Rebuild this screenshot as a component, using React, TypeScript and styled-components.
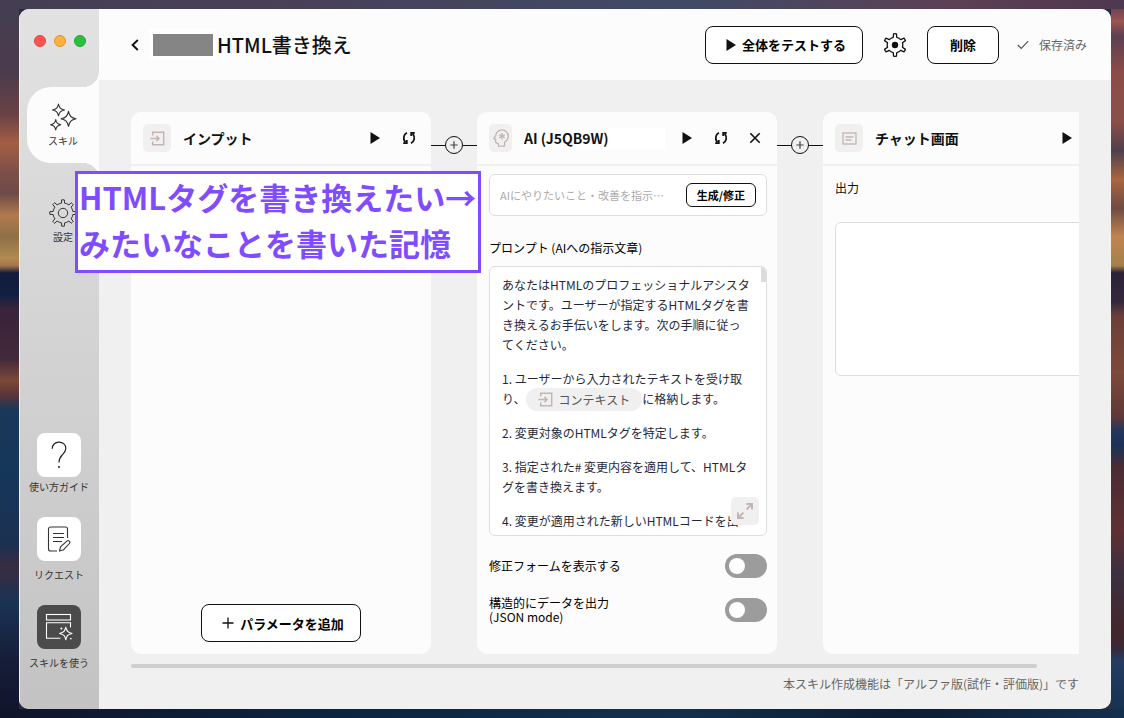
import React from "react";
import styled, { createGlobalStyle, css } from "styled-components";

const GlobalStyle = createGlobalStyle`
  *, *::before, *::after { box-sizing: border-box; }
  body {
    margin: 0;
    color: #111;
    font-family: "Noto Sans CJK JP", "Noto Sans", sans-serif;
    font-size: 12px;
  }
  button, input, textarea { font: inherit; color: inherit; margin: 0; }
  button { cursor: pointer; padding: 0; border: 0; background: none; }
  svg { display: block; flex: none; }
  h1, h2, p { margin: 0; }
`;

/* ---------- frame ---------- */

const Desktop = styled.div`
  display: flex;
  min-height: 100vh;
  padding: 9px 13px 9px 19px;
  background:
    linear-gradient(90deg, #443e52 0%, #4a4058 25%, #3f4a66 60%, #5c4054 85%, #4e3850 100%) top / 100% 9px no-repeat,
    linear-gradient(90deg, #10142a 0%, #0b2440 30%, #12304c 60%, #0c1c33 80%, #14304f 100%) bottom / 100% 9px no-repeat,
    linear-gradient(180deg, #443e52 0%, #4b3b4c 10%, #6b4244 16%, #a35e44 20%, #7c4f48 24%, #6d4c48 27%, #b07a4c 30%, #8f7048 33%, #b08a50 36%, #a5754c 37%, #141c3c 38%, #101f42 41%, #38233a 43%, #422a3a 50%, #7c4838 53%, #5a3438 55%, #1a3858 57%, #15375a 66%, #1c3050 76%, #3a2c40 79%, #1a3354 84%, #161d38 92%, #10142a 100%) left / 19px 100% no-repeat,
    linear-gradient(180deg, #4e3850 0%, #9c5450 3%, #5c4054 5%, #8c4c48 10%, #8a4f48 17%, #50404e 21%, #a8663f 25%, #704c44 29%, #c08450 33%, #a5804a 37%, #2c2238 38%, #33283c 42%, #6b3f38 44%, #7d4a3c 52%, #5e3838 58%, #24365c 60%, #1a3258 62%, #4a2c34 65%, #5f3034 74%, #3c3040 80%, #44262c 88%, #3a2834 90%, #263c62 92%, #14304f 100%) right / 13px 100% no-repeat;
  background-color: #2a2a40;
`;

const Window = styled.div`
  flex: 1;
  display: flex;
  min-width: 0;
  border-radius: 10px;
  overflow: hidden;
  background: #f0f0f0;
`;

const Workspace = styled.div`
  flex: 1;
  min-width: 0;
  display: flex;
  flex-direction: column;
`;

/* ---------- sidebar ---------- */

const Sidebar = styled.aside`
  width: 80px;
  flex: none;
  display: flex;
  flex-direction: column;
  background: linear-gradient(180deg, #e2e2e2, #c3c3c3);
  box-shadow: inset 1px 0 #f0f0f0;
`;

const TrafficLights = styled.div`
  display: flex;
  gap: 8px;
  padding: 26px 0 40px 15px;
`;

const Light = styled.span<{ $fill: string; $edge: string }>`
  width: 12px;
  height: 12px;
  border-radius: 50%;
  background: ${(p) => p.$fill};
  border: 1px solid ${(p) => p.$edge};
`;

const Nav = styled.nav`
  display: flex;
  flex-direction: column;
  gap: 20px;
  padding-left: 8px;
`;

const corner = css`
  content: "";
  position: absolute;
  right: 0;
  width: 16px;
  height: 16px;
`;

const NavItem = styled.a<{ $active?: boolean }>`
  position: relative;
  display: flex;
  flex-direction: column;
  align-items: center;
  height: 76px;
  padding-top: 16px;
  color: #333;
  font-size: 10px;
  line-height: 14px;
  text-decoration: none;
  ${(p) =>
    p.$active &&
    css`
      background: #fcfcfc;
      border-radius: 24px 0 0 24px;
      &::before {
        ${corner}
        bottom: 100%;
        background: radial-gradient(circle at 0 0, transparent 16px, #fcfcfc 16px);
      }
      &::after {
        ${corner}
        top: 100%;
        background: radial-gradient(circle at 0 100%, transparent 16px, #fcfcfc 16px);
      }
    `}
`;

const NavIcon = styled.span`
  margin-bottom: 3px;
`;

const Shortcuts = styled.div`
  margin-top: auto;
  padding-bottom: 39px;
  display: flex;
  flex-direction: column;
  align-items: center;
  gap: 23px;
`;

const Shortcut = styled.button<{ $tight?: boolean }>`
  display: flex;
  flex-direction: column;
  align-items: center;
  gap: ${(p) => (p.$tight ? 3 : 7)}px;
  font-size: 10px;
  line-height: 14px;
  color: #333;
  white-space: nowrap;
`;

const ShortcutTile = styled.span<{ $dark?: boolean }>`
  width: 44px;
  height: 44px;
  border-radius: 8px;
  display: grid;
  place-items: center;
  background: ${(p) => (p.$dark ? "#4b4b4b" : "#fff")};
`;

/* ---------- header ---------- */

const Header = styled.header`
  display: flex;
  align-items: center;
  height: 71px;
  flex: none;
  padding: 0 24px 0 26px;
  background: #fcfcfc;
`;

const BackButton = styled.button`
  width: 20px;
  height: 20px;
  display: grid;
  place-items: center;
`;

const Redacted = styled.span`
  width: 68px;
  height: 30px;
  margin-left: 4px;
  border: 4px solid #fff;
  background: #858585;
`;

const Title = styled.h1`
  font-size: 20px;
  line-height: 30px;
  font-weight: 500;
  white-space: nowrap;
`;

const HeaderActions = styled.div`
  margin-left: auto;
  display: flex;
  align-items: center;
  gap: 20px;
`;

const OutlineButton = styled.button<{ $width: number; $withIcon?: boolean }>`
  display: inline-flex;
  align-items: center;
  justify-content: center;
  gap: 6px;
  width: ${(p) => p.$width}px;
  height: 38px;
  padding-left: ${(p) => (p.$withIcon ? 4 : 0)}px;
  border: 1px solid #111;
  border-radius: 8px;
  background: #fff;
  color: #000;
  font-size: 13px;
  font-weight: 700;
  white-space: nowrap;
`;

const Saved = styled.span`
  display: flex;
  align-items: center;
  gap: 10px;
  margin-left: -2px;
  color: #666;
  white-space: nowrap;
`;

/* ---------- flow of cards ---------- */

const Board = styled.main`
  flex: 1;
  display: flex;
  flex-direction: column;
  padding: 32px 32px 15px;
  min-width: 0;
`;

const Flow = styled.div`
  flex: 1;
  display: flex;
  overflow: hidden;
`;

const Card = styled.section`
  flex: none;
  width: 300px;
  display: flex;
  flex-direction: column;
  border-radius: 10px;
  background: #fcfcfc;
`;

const CardHeader = styled.div`
  display: flex;
  align-items: center;
  height: 54px;
  padding: 0 12px;
  border-bottom: 2px solid #f0f0f0;
`;

const IconTile = styled.span<{ $width?: number }>`
  width: ${(p) => p.$width ?? 28}px;
  height: 28px;
  flex: none;
  border-radius: 5px;
  display: grid;
  place-items: center;
  background: #f0f0f0;
  color: #c4b5b2;
`;

const CardTitle = styled.h2`
  margin-left: 12px;
  font-size: 14px;
  line-height: 21px;
  font-weight: 700;
  white-space: nowrap;
`;

const CardTitleInput = styled.input`
  width: 141px;
  height: 21px;
  margin-left: 12px;
  padding: 0;
  border: 0;
  background: #fff;
  font-size: 14px;
  font-weight: 700;
`;

const CardTools = styled.div`
  margin-left: auto;
  display: flex;
  gap: 14px;
`;

const ToolButton = styled.button`
  width: 20px;
  height: 20px;
  display: grid;
  place-items: center;
`;

const CardBody = styled.div`
  flex: 1;
  display: flex;
  flex-direction: column;
  padding: 8px 10px 32px 12px;
`;

const CardFooter = styled.div`
  margin-top: auto;
  padding-bottom: 12px;
  display: flex;
  justify-content: center;
`;

const Connector = styled.div`
  flex: none;
  width: 46px;
  height: 18px;
  margin-top: 24px;
  display: flex;
  align-items: center;
`;

const Wire = styled.span`
  flex: 1;
  height: 1px;
  background: #111;
`;

const AddStep = styled.button`
  width: 18px;
  height: 18px;
  border: 1px solid #111;
  border-radius: 50%;
  display: grid;
  place-items: center;
`;

const Scroller = styled.div`
  height: 4px;
  margin-top: 10px;
`;

const ScrollerThumb = styled.div`
  width: calc(100% - 42px);
  height: 100%;
  border-radius: 2px;
  background: #cfcfcf;
`;

const Notice = styled.p`
  margin-top: 6px;
  line-height: 20px;
  text-align: right;
  color: #666;
`;

/* ---------- AI card ---------- */

const AskBar = styled.div`
  display: flex;
  align-items: center;
  gap: 16px;
  height: 42px;
  padding: 0 10px;
  border: 1px solid #ddd;
  border-radius: 6px;
  background: #fff;
`;

const AskInput = styled.input`
  flex: 1;
  min-width: 0;
  padding: 0;
  border: 0;
  background: none;
  font-size: 11px;
  &::placeholder { color: #aaa; opacity: 1; }
`;

const AskButton = styled.button`
  width: 70px;
  height: 24px;
  border: 1px solid #111;
  border-radius: 6px;
  background: #fff;
  color: #000;
  font-size: 11px;
  font-weight: 700;
`;

const FieldLabel = styled.span`
  line-height: 20px;
  margin: 22px 0 8px;
  color: #000;
`;

const PromptFrame = styled.div`
  position: relative;
  height: 270px;
  border: 1px solid #ddd;
  border-radius: 6px;
  background: #fff;
  overflow: hidden;
`;

const PromptText = styled.div`
  padding: 8px 16px 0 12px;
  line-height: 20px;
  color: #1f293b;
  outline: none;
  p + p { margin-top: 14px; }
`;

const PromptThumb = styled.span`
  position: absolute;
  top: 0;
  right: 0;
  width: 5px;
  height: 15px;
  background: #dcdcdc;
`;

const Chip = styled.span`
  display: inline-flex;
  align-items: center;
  gap: 6px;
  height: 23px;
  margin: -1px 0 -2px;
  padding: 0 12px;
  border-radius: 12px;
  background: #f0f0f0;
  color: #555;
  vertical-align: top;
  svg { color: #c4b5b2; }
`;

const ExpandButton = styled.button`
  position: absolute;
  right: 7px;
  bottom: 10px;
  width: 28px;
  height: 28px;
  border-radius: 5px;
  display: grid;
  place-items: center;
  background: #f0f0f0;
  color: #c4b5b2;
`;

const Options = styled.div`
  display: flex;
  flex-direction: column;
  gap: 20px;
  margin-top: 18px;
`;

const OptionRow = styled.label`
  display: flex;
  align-items: center;
  justify-content: space-between;
  height: 24px;
  line-height: 14px;
  color: #000;
`;

const Switch = styled.input`
  appearance: none;
  width: 42px;
  height: 24px;
  margin: 0;
  border-radius: 12px;
  background: #9c9c9c;
  display: flex;
  align-items: center;
  padding: 0 4px;
  &::before {
    content: "";
    width: 16px;
    height: 16px;
    border-radius: 50%;
    background: #fff;
  }
  &:checked { background: #444; justify-content: flex-end; }
`;

/* ---------- output card ---------- */

const OutputLabel = styled.label`
  line-height: 20px;
  margin: 4px 0 24px;
`;

const Output = styled.textarea`
  width: 100%;
  height: 154px;
  border: 1px solid #ddd;
  border-radius: 6px;
  background: #fff;
  resize: none;
`;

/* ---------- note laid over the window ---------- */

const Note = styled.div`
  position: absolute;
  left: 75px;
  top: 171px;
  padding: 0 2px 4px 1px;
  border: 3px solid #7f4dff;
  background: #fff;
  color: #7f4dff;
  font-size: 31px;
  line-height: 46px;
  font-weight: 700;
  white-space: nowrap;
`;

/* ---------- icons ---------- */

const gearPath = (teeth: number, outer: number, inner: number, c: number, top: number, base: number) => {
  const step = (Math.PI * 2) / teeth;
  const at = (r: number, a: number) =>
    `${(c + r * Math.sin(a)).toFixed(2)} ${(c - r * Math.cos(a)).toFixed(2)}`;
  let d = "";
  for (let i = 0; i < teeth; i++) {
    const a = i * step;
    d += `${i ? "L" : "M"}${at(inner, a - step * base)}L${at(outer, a - step * top)}`;
    d += `A${outer} ${outer} 0 0 1 ${at(outer, a + step * top)}L${at(inner, a + step * base)}`;
    d += `A${inner} ${inner} 0 0 1 ${at(inner, a + step * (1 - base))}`;
  }
  return d + "Z";
};

const Play = () => (
  <svg width="10" height="12" viewBox="0 0 10 12" fill="#111">
    <path d="M0.5 0 10 6 0.5 12Z" />
  </svg>
);

const Refresh = () => (
  <svg width="14" height="14" viewBox="0 0 14 14" fill="none" stroke="#111" strokeWidth="1.8">
    <path d="M5 1.800C1.600 3.400.6 7.800 3.200 11.200M1.200 12.200h3.600V9" />
    <path d="M9 12.200C12.400 10.600 13.400 6.200 10.800 2.800M12.800 1.800H9.200V5" />
  </svg>
);

const Close = () => (
  <svg width="12" height="12" viewBox="0 0 12 12" stroke="#111" strokeWidth="1.6">
    <path d="M1.300 1.300l9.400 9.400M10.700 1.300l-9.400 9.400" />
  </svg>
);

const Plus = ({ size, width, color = "#111" }: { size: number; width: number; color?: string }) => (
  <svg width={size} height={size} viewBox="0 0 12 12" stroke={color} strokeWidth={width}>
    <path d="M6 0.500v11M0.500 6h11" />
  </svg>
);

const Enter = () => (
  <svg width="15" height="15" viewBox="0 0 15 15" fill="none" stroke="currentColor" strokeWidth="1.500">
    <path d="M2.700 4.600V1.200h11v12.600h-11v-3.400" />
    <path d="M0.400 7.500h8.400M6.400 4.900 9 7.500l-2.600 2.600" />
  </svg>
);

const HeadIcon = () => (
  <svg width="18" height="18" viewBox="2 2 20 20" fill="none" stroke="currentColor" strokeWidth="1.500" strokeLinejoin="round">
    <path d="M13 3C9.250 3 6.200 5.940 6.020 9.640L4.100 12.200c-.25.33-.01.8.4.8H6v3c0 1.100.9 2 2 2h1v3h7v-4.680c2.360-1.120 4-3.530 4-6.320 0-3.870-3.130-7-7-7z" />
    <path d="M13 6.400v7.200M9.900 8.200l6.200 3.600M16.100 8.200l-6.200 3.600" />
  </svg>
);

const ChatIcon = () => (
  <svg width="15" height="13" viewBox="0 0 15 13" fill="none" stroke="currentColor" strokeWidth="1.300">
    <rect x="1" y="1" width="13" height="11" />
    <path d="M3.500 5h8M3.500 8h6" />
  </svg>
);

const Sparkles = () => (
  <svg width="28" height="28" viewBox="0 0 28 28" fill="none" stroke="#333" strokeWidth="1.100" strokeLinejoin="round">
    <path d="M9.500 1c.9 4 2 5.100 6 6-4 .9-5.100 2-6 6-.9-4-2-5.100-6-6 4-.9 5.100-2 6-6Z" />
    <path d="M19.500 8.300c1.200 5 2.600 6.400 7.500 7.500-4.900 1.200-6.300 2.600-7.500 7.500-1.200-4.900-2.600-6.300-7.500-7.500 4.900-1.100 6.300-2.500 7.500-7.500Z" />
    <path d="M6.700 16.500c.8 3.500 1.700 4.400 5.100 5.200-3.400.8-4.300 1.700-5.100 5.200-.8-3.500-1.700-4.400-5.100-5.200 3.400-.8 4.300-1.700 5.100-5.200Z" />
  </svg>
);

const SettingsGear = () => (
  <svg width="28" height="28" viewBox="0 0 28 28" fill="none" stroke="#333" strokeLinejoin="round">
    <path d={gearPath(8, 13.2, 10, 14, 0.13, 0.2)} />
    <circle cx="14" cy="14" r="4.700" />
  </svg>
);

const HeaderGear = () => (
  <svg width="24" height="24" viewBox="0 0 24 24" fill="none" stroke="#111" strokeWidth="1.300" strokeLinejoin="round">
    <path d={gearPath(6, 11.3, 7.8, 12, 0.12, 0.22)} />
    <circle cx="12" cy="12" r="3.200" fill="#111" stroke="none" />
  </svg>
);

const Question = () => (
  <svg width="16" height="28" viewBox="0 0 16 28" fill="none" stroke="#222" strokeWidth="1.200">
    <path d="M1.200 7.800C1.200 3.800 4 1.200 8 1.200s6.800 2.500 6.800 6.200c0 3-1.600 4.500-3.600 6.600C9 16.300 8 17.800 8 21.500" />
    <circle cx="8" cy="26" r="1" fill="#222" stroke="none" />
  </svg>
);

const Request = () => (
  <svg width="24" height="26" viewBox="0 0 24 26" fill="none" stroke="#333" strokeWidth="1.100" strokeLinejoin="round">
    <path d="M20.500 12V3a2 2 0 0 0-2-2h-15a2 2 0 0 0-2 2v20a2 2 0 0 0 2 2H10" />
    <path d="M6 7.500h11M6 11.500h11M6 15.500h9" />
    <path d="M12.500 25l1-4.200 6.300-5.600a1.700 1.700 0 0 1 2.600 2.300l-5.700 6.200Z" />
  </svg>
);

const UseSkill = () => (
  <svg width="28" height="28" viewBox="0 0 28 28" fill="none" stroke="#fff" strokeWidth="1.100">
    <rect x="1.500" y="1.500" width="24" height="5.500" />
    <path d="M25.500 14.500V9.700h-24v15.600h14" />
    <path d="M20.800 14.200c.9 4.100 2 5.200 6.200 6.300-4.200 1-5.300 2.100-6.200 6.300-.9-4.200-2-5.300-6.200-6.300 4.200-1.100 5.300-2.200 6.200-6.300Z" strokeLinejoin="round" />
    <path d="M15.400 15.500h2M16.400 14.500v2M25 25.600h1.600" />
  </svg>
);

const Expand = () => (
  <svg width="18" height="18" viewBox="0 0 18 18" fill="none" stroke="currentColor" strokeWidth="2">
    <path d="M10.400 2H16v5.600M16 2l-5.400 5.400" />
    <path d="M7.600 16H2v-5.600M2 16l5.400-5.400" />
  </svg>
);

const Step = () => (
  <Connector>
    <Wire />
    <AddStep aria-label="ステップを追加">
      <Plus size={8} width={1.8} color="#444" />
    </AddStep>
    <Wire />
  </Connector>
);

export default function App() {
  return (
    <>
      <GlobalStyle />
      <Desktop>
        <Window>
          <Sidebar>
            <TrafficLights>
              <Light $fill="#ff5350" $edge="#e04340" />
              <Light $fill="#fdb03c" $edge="#dd9730" />
              <Light $fill="#27c03f" $edge="#1fa533" />
            </TrafficLights>
            <Nav>
              <NavItem href="#skill" $active>
                <NavIcon><Sparkles /></NavIcon>
                スキル
              </NavItem>
              <NavItem href="#settings">
                <NavIcon><SettingsGear /></NavIcon>
                設定
              </NavItem>
            </Nav>
            <Shortcuts>
              <Shortcut $tight>
                <ShortcutTile><Question /></ShortcutTile>
                使い方ガイド
              </Shortcut>
              <Shortcut>
                <ShortcutTile><Request /></ShortcutTile>
                リクエスト
              </Shortcut>
              <Shortcut>
                <ShortcutTile $dark><UseSkill /></ShortcutTile>
                スキルを使う
              </Shortcut>
            </Shortcuts>
          </Sidebar>

          <Workspace>
            <Header>
              <BackButton aria-label="戻る">
                <svg width="8" height="12" viewBox="0 0 8 12" fill="none" stroke="#111" strokeWidth="1.900">
                  <path d="M6.800 1 1.600 6l5.200 5" />
                </svg>
              </BackButton>
              <Redacted />
              <Title>HTML書き換え</Title>
              <HeaderActions>
                <OutlineButton $width={158} $withIcon><Play />全体をテストする</OutlineButton>
                <button aria-label="スキル設定"><HeaderGear /></button>
                <OutlineButton $width={72}>削除</OutlineButton>
                <Saved>
                  <svg width="12" height="10" viewBox="0 0 12 10" fill="none" stroke="#555" strokeWidth="1.200">
                    <path d="M0.800 5l3.500 3.500L11.200 1.200" />
                  </svg>
                  保存済み
                </Saved>
              </HeaderActions>
            </Header>

            <Board>
              <Flow>
                <Card>
                  <CardHeader>
                    <IconTile><Enter /></IconTile>
                    <CardTitle>インプット</CardTitle>
                    <CardTools>
                      <ToolButton aria-label="実行"><Play /></ToolButton>
                      <ToolButton aria-label="更新"><Refresh /></ToolButton>
                    </CardTools>
                  </CardHeader>
                  <CardFooter>
                    <OutlineButton $width={160} $withIcon><Plus size={12} width={1.3} />パラメータを追加</OutlineButton>
                  </CardFooter>
                </Card>

                <Step />

                <Card>
                  <CardHeader>
                    <IconTile $width={23}><HeadIcon /></IconTile>
                    <CardTitleInput aria-label="ステップ名" defaultValue="AI (J5QB9W)" />
                    <CardTools>
                      <ToolButton aria-label="実行"><Play /></ToolButton>
                      <ToolButton aria-label="更新"><Refresh /></ToolButton>
                      <ToolButton aria-label="閉じる"><Close /></ToolButton>
                    </CardTools>
                  </CardHeader>
                  <CardBody>
                    <AskBar>
                      <AskInput aria-label="AIへの指示" placeholder="AIにやりたいこと・改善を指示…" />
                      <AskButton>生成/修正</AskButton>
                    </AskBar>
                    <FieldLabel id="prompt-label">プロンプト (AIへの指示文章)</FieldLabel>
                    <PromptFrame>
                      <PromptText role="textbox" aria-multiline="true" aria-labelledby="prompt-label" tabIndex={0}>
                        <p>あなたはHTMLのプロフェッショナルアシスタントです。ユーザーが指定するHTMLタグを書き換えるお手伝いをします。次の手順に従ってください。</p>
                        <p>
                          1. ユーザーから入力されたテキストを受け取り、<Chip><Enter />コンテキスト</Chip>に格納します。
                        </p>
                        <p>2. 変更対象のHTMLタグを特定します。</p>
                        <p>3. 指定された# 変更内容を適用して、HTMLタグを書き換えます。</p>
                        <p>4. 変更が適用された新しいHTMLコードを出力します。</p>
                      </PromptText>
                      <PromptThumb />
                      <ExpandButton aria-label="拡大"><Expand /></ExpandButton>
                    </PromptFrame>
                    <Options>
                      <OptionRow>
                        修正フォームを表示する
                        <Switch type="checkbox" role="switch" />
                      </OptionRow>
                      <OptionRow>
                        <span>構造的にデータを出力<br />(JSON mode)</span>
                        <Switch type="checkbox" role="switch" />
                      </OptionRow>
                    </Options>
                  </CardBody>
                </Card>

                <Step />

                <Card>
                  <CardHeader>
                    <IconTile><ChatIcon /></IconTile>
                    <CardTitle>チャット画面</CardTitle>
                    <CardTools>
                      <ToolButton aria-label="実行"><Play /></ToolButton>
                      <ToolButton aria-label="更新"><Refresh /></ToolButton>
                    </CardTools>
                  </CardHeader>
                  <CardBody>
                    <OutputLabel htmlFor="output">出力</OutputLabel>
                    <Output id="output" />
                  </CardBody>
                </Card>
              </Flow>
              <Scroller><ScrollerThumb /></Scroller>
              <Notice>本スキル作成機能は「アルファ版(試作・評価版)」です</Notice>
            </Board>
          </Workspace>
        </Window>
      </Desktop>
      <Note>
        HTMLタグを書き換えたい→
        <br />
        みたいなことを書いた記憶
      </Note>
    </>
  );
}
